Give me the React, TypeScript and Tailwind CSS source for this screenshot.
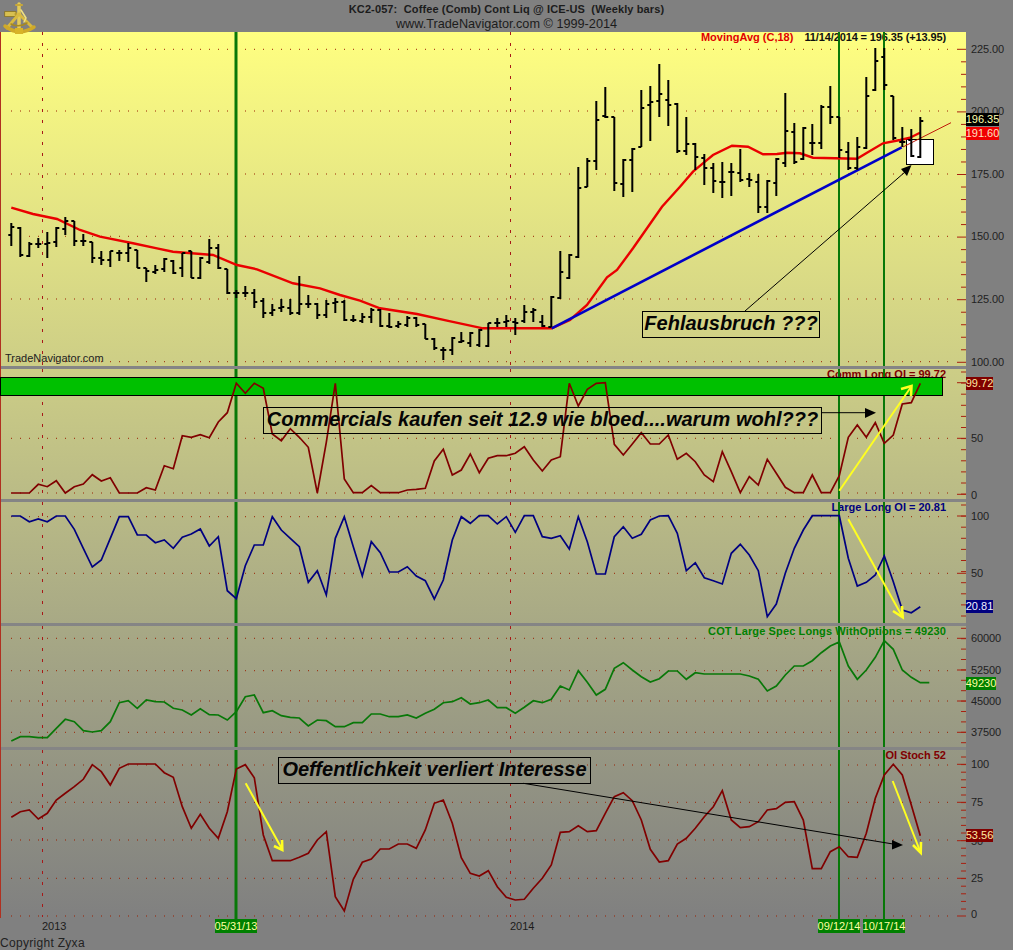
const X = (i: number) => 11.3 + 9 * i;

// [high, low, open, close] in page px, one per week
const bars: number[][] = [
  [223, 246, 235, 227], [227, 257, 228, 255], [242, 257, 256, 244], [238, 248, 244, 244],
  [232, 258, 244, 243], [227, 247, 242, 228], [217, 235, 229, 221], [221, 246, 221, 241],
  [234, 246, 241, 241], [242, 263, 242, 258], [251, 265, 258, 260], [251, 267, 260, 251],
  [250, 261, 253, 253], [243, 262, 253, 248], [250, 268, 250, 268], [268, 282, 268, 271],
  [265, 274, 272, 270], [258, 272, 269, 259], [260, 274, 261, 273], [253, 277, 268, 253],
  [251, 278, 251, 278], [257, 279, 278, 258], [239, 264, 262, 248], [244, 269, 248, 268],
  [269, 294, 269, 293], [290, 298, 293, 293], [286, 297, 293, 293], [289, 308, 293, 302],
  [298, 318, 301, 313], [304, 316, 313, 310], [299, 312, 308, 307], [299, 315, 308, 313],
  [276, 315, 313, 304], [295, 308, 304, 304], [303, 319, 304, 315], [300, 318, 315, 304],
  [298, 313, 303, 302], [300, 321, 302, 320], [315, 322, 320, 320], [313, 323, 321, 317],
  [308, 323, 317, 310], [309, 327, 310, 326], [313, 328, 326, 327], [321, 328, 326, 324],
  [316, 327, 325, 318], [317, 327, 318, 325], [324, 339, 324, 339], [338, 350, 339, 348],
  [347, 360, 350, 350], [337, 355, 350, 338], [332, 343, 342, 341], [332, 347, 343, 333],
  [329, 347, 345, 330], [323, 347, 346, 323], [318, 327, 323, 323], [315, 327, 322, 321],
  [318, 335, 322, 323], [305, 323, 321, 312], [308, 322, 312, 310], [315, 327, 322, 326],
  [296, 327, 327, 297], [251, 299, 298, 272], [254, 279, 278, 255], [167, 258, 257, 188],
  [158, 187, 187, 161], [101, 170, 161, 120], [87, 118, 116, 117], [117, 191, 117, 183],
  [159, 197, 184, 160], [148, 192, 160, 149], [90, 147, 147, 108], [86, 141, 105, 102],
  [64, 117, 101, 94], [80, 126, 100, 105], [103, 153, 104, 151], [117, 155, 151, 144],
  [143, 170, 144, 157], [154, 185, 158, 168], [163, 193, 168, 181], [162, 198, 182, 182],
  [163, 196, 172, 172], [149, 182, 173, 180], [173, 187, 179, 180], [174, 213, 182, 207],
  [180, 213, 207, 181], [158, 196, 183, 159], [93, 167, 163, 131], [123, 164, 132, 162],
  [127, 160, 159, 128], [124, 155, 143, 143], [105, 149, 143, 107], [86, 124, 107, 117],
  [117, 158, 117, 150], [142, 170, 152, 168], [137, 170, 168, 147], [77, 149, 148, 96],
  [48, 91, 90, 61], [48, 90, 57, 85], [96, 140, 96, 138], [127, 147, 142, 142],
  [129, 157, 140, 156], [117, 158, 157, 121],
];

// values were read off 3x crops: y0 is the crop's top edge
const at = (y0: number, values: number[]) => values.map((z) => y0 + z / 3);
const toLine = (ys: number[]) => ys.map((y, i) => `${X(i).toFixed(1)},${y.toFixed(1)}`).join(" ");

const commOI = toLine([
  ...at(320, [
    519, 519, 519, 493, 500, 482, 519, 500, 492, 464, 483, 473, 519, 519, 519, 503, 510, 437, 446, 347,
    352, 344, 353, 306, 278, 190, 220, 190, 205, 342, 362, 326, 352, 382, 519, 367, 190,
  ]),
  ...at(360, [
    357, 398, 398, 377, 398, 398, 398, 390, 388, 385, 303, 268, 345, 330, 282, 338, 295, 287, 287, 280,
    260, 300, 333, 300, 290, 70, 138, 88, 70, 68, 253, 285, 252, 218, 252, 252, 225, 298,
    280, 305, 345, 365, 275, 335, 398, 350, 375, 298, 340, 382, 398, 398, 345, 398, 398, 347, 232, 195,
    232, 188, 250, 225, 132, 128, 70,
  ]),
]);

const largeOI = toLine([
  ...at(320, [
    588, 588, 605, 597, 605, 588, 588, 628, 685, 741, 720, 655, 590, 590, 645, 645, 668, 660, 685, 652,
    642, 627, 678, 650, 812, 836, 737, 675, 675, 590, 630, 655, 680, 787, 752, 825, 655,
  ]),
  ...at(360, [
    470, 560, 648, 545, 578, 636, 636, 620, 648, 662, 717, 660, 540, 470, 490, 467, 467, 492, 470, 517,
    467, 467, 530, 535, 527, 567, 470, 545, 642, 642, 530, 500, 535, 523, 480, 468, 467, 520,
    632, 608, 653, 662, 672, 580, 553, 585, 632, 770, 732, 640, 565, 510, 467, 467, 467, 467, 595, 678,
    667, 645, 588, 665, 750, 758, 740,
  ]),
]);

const specLongs = toLine(at(620, [
  363, 350, 350, 353, 353, 325, 298, 305, 332, 336, 332, 305, 248, 242, 265, 240, 245, 246, 265, 270,
  285, 266, 284, 285, 300, 275, 230, 225, 278, 272, 287, 292, 294, 318, 300, 302, 320, 320, 308, 308,
  282, 282, 290, 290, 285, 294, 280, 268, 248, 245, 233, 252, 248, 240, 263, 263, 280, 262, 242, 248,
  238, 198, 210, 152, 187, 225, 208, 145, 128, 150, 170, 186, 176, 153, 153, 178, 158, 162, 162, 162,
  162, 162, 168, 178, 213, 198, 165, 138, 138, 122, 98, 78, 66, 138, 178, 150, 112, 62, 88, 150,
  172, 188, 188,
]));

const stoch = toLine(at(620, [
  592, 575, 570, 597, 580, 540, 520, 500, 478, 434, 455, 495, 445, 432, 432, 432, 432, 458, 472, 560,
  625, 583, 625, 655, 575, 447, 434, 473, 645, 722, 722, 722, 712, 700, 660, 635, 830, 873, 778, 727,
  717, 687, 687, 672, 672, 685, 630, 550, 540, 610, 713, 760, 768, 752, 800, 832, 840, 838, 805, 775,
  735, 637, 635, 617, 635, 632, 580, 530, 518, 542, 600, 688, 726, 722, 672, 655, 625, 590, 560, 512,
  600, 623, 620, 605, 570, 566, 547, 545, 600, 746, 746, 695, 680, 710, 712, 640, 535, 465, 433, 465,
  555, 647,
]));

const movingAvg =
  "11.3,207.7 33,214 57,219 80,230 100,236.7 133,243.3 157,248.3 173,251.7 213,255 237,265 257,269.3 293,283.3 320,288.3 340,295 360,300.7 380,308.3 417,314 447,320.7 483,328.3 551.7,328.3 570,320 587,305 607,277.3 617,270 633,248.3 662,206.7 680,186.7 693,171.7 705,161.7 713,155 732,145.7 748,146.7 763,154.3 777,154 787,152.7 800,153.3 813,157.7 857,158.7 867,152.7 883,143.3 900,140 910,137.7 920,132.7";

const gridY = [49.3, 111, 174, 236.3, 299, 361.7, 438.3, 493, 516.7, 573.3, 638.3, 670.7, 701, 732.3, 765, 802.3, 840, 878.3, 916];

// first tick, gap between ticks, tick count, major every n
const tickRuns = [
  { y: 49.3, gap: 12.52, count: 26, major: 5 },
  { y: 372, gap: 11.1, count: 12, major: 0 },
  { y: 505, gap: 11.1, count: 11, major: 0 },
  { y: 628.3, gap: 10.4, count: 12, major: 0 },
  { y: 757, gap: 7.6, count: 21, major: 0 },
];
const bigTicks = [382.7, 438.3, 494.3, 516, 573.3, 638.3, 670, 701, 732.3, 764.3, 802.3, 840.7, 878.3, 916];

const axisLabels: [string, number][] = [
  ["225.00", 49], ["200.00", 111], ["175.00", 174], ["150.00", 236], ["125.00", 299], ["100.00", 362],
  ["50", 438], ["0", 495], ["100", 516], ["50", 573],
  ["60000", 638], ["52500", 670], ["45000", 701], ["37500", 732],
  ["100", 764], ["75", 802], ["50", 841], ["25", 878], ["0", 914],
];

const segments: [number, number][] = [[32, 366], [369, 499], [502, 623], [626, 747], [750, 920]];

const Arrow = ({ d, head, color }: { d: string; head: string; color: string }) => (
  <g>
    <polyline points={d} fill="none" stroke={color} strokeWidth={color === "#000" ? 1 : 2} />
    {color === "#000" ? (
      <polygon points={head} fill="#000" />
    ) : (
      <polyline points={head} fill="none" stroke={color} strokeWidth="2.6" />
    )}
  </g>
);

const Sextant = () => (
  <svg viewBox="0 0 40 40" className="absolute left-0 top-0 z-10 h-10 w-10">
    <g fill="none" strokeLinecap="round" strokeLinejoin="round">
      <rect x="5" y="11.5" width="11" height="5" fill="#d8c050" stroke="#8a7420" strokeWidth="0.8" />
      <path d="M16 14 H20" stroke="#b89a30" strokeWidth="3" />
      <path d="M19 4 V31" stroke="#e4cc58" strokeWidth="3.5" />
      <path d="M16 5 H22" stroke="#c8a838" strokeWidth="2" />
      <path d="M19 14 L7 28 M19 14 L32 27" stroke="#d8ba40" strokeWidth="3" />
      <path d="M21 10 L26 18 L24 22" stroke="#f0e080" strokeWidth="1.5" />
      <path d="M5 26 Q19 37 34 27" stroke="#d0aa28" strokeWidth="3.5" />
      <path d="M11 24 Q19 28 27 23" stroke="#a88a20" strokeWidth="1.5" />
    </g>
    <rect x="15" y="28" width="8" height="6" fill="#d8b428" />
  </svg>
);

const Note = ({ className, children }: { className: string; children: string }) => (
  <div className={`absolute flex h-[27px] items-center justify-center whitespace-nowrap border border-black pb-[3px] text-[20px] font-bold italic text-[#050505] ${className}`}>
    {children}
  </div>
);

const Badge = ({ className, children }: { className: string; children: string }) => (
  <div className={`absolute left-[966px] flex h-[13px] items-center justify-center text-[11px] leading-none ${className}`}>
    {children}
  </div>
);

const DateBadge = ({ children }: { children: string }) => (
  <div className="flex h-[14px] w-[42px] items-center justify-center bg-[#008000] text-[11px] leading-none text-[#ffffa0]">
    {children}
  </div>
);

export default function App() {
  return (
    <div className="relative h-[950px] w-[1013px] overflow-hidden bg-[#808080] font-['Liberation_Sans',Arial,sans-serif] text-[#1c1c1c]">
      <header className="flex h-8 flex-col items-center whitespace-pre pt-[3px] leading-none">
        <div className="h-[14px] text-[11px] font-bold leading-[12px] tracking-[0.12px]">KC2-057:  Coffee (Comb) Cont Liq @ ICE-US  (Weekly bars)</div>
        <div className="text-[12.7px] leading-[14px]">www.TradeNavigator.com © 1999-2014</div>
      </header>
      <Sextant />

      <div className="relative flex h-[886px] w-[966px] flex-col border-l border-l-[#b03020] bg-gradient-to-b from-[#ffff80] to-[#808080] text-[11px] font-bold leading-[10px]">
        <section className="relative flex h-[334px] items-start justify-end pr-[20px]">
          <span className="mr-[11px] text-[#e00000]">MovingAvg (C,18)</span>
          <span className="tracking-[-0.12px] text-[#101010]">11/14/2014 = 196.35 (+13.95)</span>
          <span className="absolute bottom-[2px] left-[4px] font-normal leading-[12px] text-[#222]">TradeNavigator.com</span>
        </section>
        <div className="h-[3px] bg-[#858585]" />
        <section className="flex h-[130px] justify-end pr-[20px] text-[#800000]">Comm Long OI = 99.72</section>
        <div className="h-[3px] bg-[#858585]" />
        <section className="flex h-[121px] justify-end pr-[20px] text-[#000080]">Large Long OI = 20.81</section>
        <div className="h-[3px] bg-[#858585]" />
        <section className="flex h-[121px] justify-end pr-[20px] tracking-[0.12px] text-[#008000]">COT Large Spec Longs WithOptions = 49230</section>
        <div className="h-[3px] bg-[#858585]" />
        <section className="flex flex-1 justify-end pr-[20px] text-[#800000]">OI Stoch 52</section>
      </div>

      <footer className="flex flex-col pt-px">
        <div className="grid grid-cols-[42px_173px_295px_308px_45px_42px] items-center">
          <span />
          <span className="text-[11px] leading-none">2013</span>
          <DateBadge>05/31/13</DateBadge>
          <span className="text-[11px] leading-none">2014</span>
          <DateBadge>09/12/14</DateBadge>
          <DateBadge>10/17/14</DateBadge>
        </div>
        <div className="mt-[3px] text-[12px] leading-[14px] tracking-[0.3px] text-[#222]">Copyright Zyxa</div>
      </footer>

      <svg viewBox="0 0 1013 950" className="pointer-events-none absolute inset-0 h-[950px] w-[1013px]">
        {gridY.map((y) => (
          <line key={y} x1="11" x2="950" y1={y} y2={y} stroke="#9a2000" strokeWidth="1" strokeDasharray="1 8" />
        ))}
        {[42.5, 510.5].map((x) =>
          segments.map(([a, b]) => (
            <line key={`${x}-${a}`} x1={x} x2={x} y1={a} y2={Math.min(b, 917)} stroke="#a81818" strokeWidth="1" strokeDasharray="3 8" />
          )),
        )}
        {[236, 839, 884].map((x) =>
          segments.map(([a, b]) => (
            <line key={`${x}-${a}`} x1={x} x2={x} y1={a} y2={b} stroke="#087808" strokeWidth={x === 236 ? 3 : 2} />
          )),
        )}

        {tickRuns.map((run) =>
          Array.from({ length: run.count }, (_, k) => {
            const y = run.y + k * run.gap;
            return <line key={`${run.y}-${k}`} x1={run.major && k % run.major === 0 ? 957 : 961} x2="966" y1={y} y2={y} stroke="#a82010" />;
          }),
        )}
        {bigTicks.map((y) => (
          <line key={y} x1="957" x2="966" y1={y} y2={y} stroke="#a82010" />
        ))}
        {axisLabels.map(([label, y]) => (
          <text key={`${label}-${y}`} x="971" y={y + 4} fontSize="11" letterSpacing="-0.1" fill="#222">{label}</text>
        ))}

        <rect x="0.5" y="377.5" width="942" height="18" fill="#00c000" stroke="#000" />
        <rect x="906.5" y="139.5" width="27" height="25" fill="#fff" stroke="#000" />

        <polyline points={movingAvg} fill="none" stroke="#ea0000" strokeWidth="2.4" />
        <line x1="903" y1="147" x2="951" y2="122.7" stroke="#c01808" strokeWidth="1" />
        <line x1="551.7" y1="328.3" x2="901.7" y2="147.3" stroke="#0000c8" strokeWidth="2.6" />
        {bars.map(([high, low, open, close], i) => {
          const x = X(i);
          return (
            <g key={i} stroke="#000">
              <line x1={x} x2={x} y1={high} y2={low} strokeWidth="2" />
              <line x1={x - 3} x2={x} y1={open} y2={open} strokeWidth="2" />
              <line x1={x} x2={x + 3} y1={close} y2={close} strokeWidth="2" />
            </g>
          );
        })}

        <polyline points={commOI} fill="none" stroke="#800000" strokeWidth="1.7" />
        <polyline points={largeOI} fill="none" stroke="#000080" strokeWidth="1.7" />
        <polyline points={specLongs} fill="none" stroke="#087808" strokeWidth="1.7" />
        <polyline points={stoch} fill="none" stroke="#800000" strokeWidth="1.7" />

        <Arrow color="#000" d="745,311 905,172" head="911.5,165 901,169 907,176" />
        <Arrow color="#000" d="821,412.7 866,412.7" head="876,412.7 865,408 865,418" />
        <Arrow color="#000" d="523.3,783.3 893,844" head="903,845 892,840 892,849.5" />
        <Arrow color="#ffff20" d="839.3,490.7 911,387" head="901,389 911.5,386 911,396" />
        <Arrow color="#ffff20" d="848.3,519.3 902,616" head="893,611 902.7,617.3 902,606" />
        <Arrow color="#ffff20" d="245.7,783.3 282,849" head="274,846 282.3,850 282,840" />
        <Arrow color="#ffff20" d="892.7,781 920,851" head="913,845 920.7,852.7 921,842" />
      </svg>

      <Note className="left-[642px] top-[311px] w-[178px]">Fehlausbruch ???</Note>
      <Note className="left-[263px] top-[407px] w-[559px]">Commercials kaufen seit 12.9 wie bloed....warum wohl???</Note>
      <Note className="left-[278px] top-[757px] w-[313px]">Oeffentlichkeit verliert Interesse</Note>

      <Badge className="top-[113px] w-[33px] bg-black text-[#ffffb0]">196.35</Badge>
      <Badge className="top-[127px] w-[33px] bg-[#f00000] text-[#ffe0c0]">191.60</Badge>
      <Badge className="top-[377px] w-[27px] bg-[#800000] text-[#ffe8a0]">99.72</Badge>
      <Badge className="top-[600px] w-[27px] bg-[#000080] text-[#f0f0ff]">20.81</Badge>
      <Badge className="top-[677px] w-[30px] bg-[#008000] text-[#ffffa0]">49230</Badge>
      <Badge className="top-[829px] w-[27px] bg-[#800000] text-[#ffe8a0]">53.56</Badge>
    </div>
  );
}
